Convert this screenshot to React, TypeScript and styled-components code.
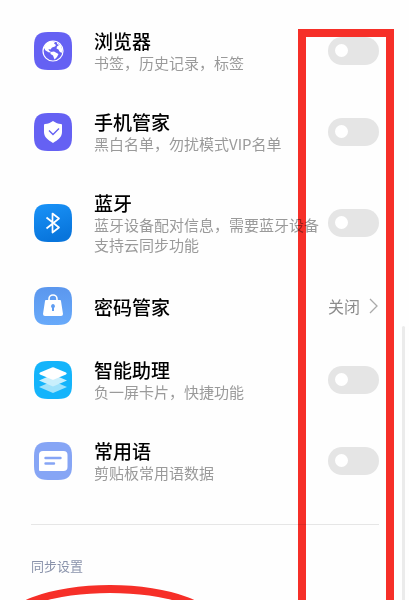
import React from "react";
import styled, { createGlobalStyle } from "styled-components";

const GlobalStyle = createGlobalStyle`
  * { box-sizing: border-box; }
  html { height: 100%; overflow: hidden; }
  body {
    height: 100%;
    margin: 0;
    overflow: hidden;
    background: #fefefe;
    font-family: "Noto Sans CJK SC", "Noto Sans", sans-serif;
  }
  #root { height: 100%; }
`;

const Screen = styled.div`
  position: relative;
  isolation: isolate;
  height: 100%;
  overflow: hidden;
  background: #fefefe;
`;

const Page = styled.main`
  padding: 10px 30px 0 31px;
`;

const List = styled.ul`
  list-style: none;
  margin: 0;
  padding: 0 0 0 3px;
`;

const Row = styled.li<{ $compact?: boolean }>`
  display: flex;
  align-items: center;
  padding: ${(p) => (p.$compact ? "14px" : "18px")} 0;
`;

const AppIcon = styled.svg`
  flex: none;
  width: 38px;
  height: 38px;
  margin-right: 22px;
`;

const Copy = styled.div`
  flex: 1;
  min-width: 0;
  display: flex;
  flex-direction: column;
`;

const Title = styled.label`
  font-size: 19px;
  line-height: 25px;
  font-weight: 500;
  color: #000;
`;

const Description = styled.span`
  font-size: 15px;
  line-height: 20px;
  color: #9a9a9a;
`;

const Toggle = styled.input`
  appearance: none;
  flex: none;
  display: flex;
  align-items: center;
  width: 51px;
  height: 28px;
  margin: 0;
  padding: 0 7px;
  border-radius: 14px;
  background: #e5e5e5;

  &::before {
    content: "";
    width: 13px;
    height: 13px;
    border-radius: 50%;
    background: #fff;
  }

  &:checked {
    justify-content: flex-end;
    background: #3482ff;
  }
`;

const LinkButton = styled.button`
  display: flex;
  align-items: center;
  gap: 9px;
  padding: 0;
  border: 0;
  background: none;
  font-family: inherit;
  font-size: 16px;
  line-height: 24px;
  color: #8c8c8c;
`;

const Divider = styled.hr`
  height: 1px;
  margin: 23px 0 31px;
  border: 0;
  background: #e6e6e6;
`;

const SectionTitle = styled.h2`
  margin: 0;
  font-size: 13px;
  line-height: 20px;
  font-weight: 400;
  color: #8a93ab;
`;

const ScrollThumb = styled.div`
  position: absolute;
  top: 326px;
  right: 4px;
  bottom: 0;
  width: 3px;
  border-radius: 2px 2px 0 0;
  background: #ebebeb;
`;

const MarkerBox = styled.div`
  position: absolute;
  top: 29px;
  right: 15px;
  bottom: -20px;
  width: 96px;
  border: 8px solid #f72f28;
  mix-blend-mode: multiply;
`;

const MarkerEllipse = styled.div`
  position: absolute;
  left: 0;
  bottom: -69px;
  width: 220px;
  height: 84px;
  border: 8px solid #f72f28;
  border-radius: 50%;
  mix-blend-mode: multiply;
`;

const tile = "M14 0h10C34 0 38 4 38 14v10c0 10-4 14-14 14H14C4 38 0 34 0 24V14C0 4 4 0 14 0Z";

const GlobeIcon = () => (
  <AppIcon viewBox="0 0 38 38" aria-hidden="true">
    <path d={tile} fill="#6561f3" />
    <circle cx="19" cy="19" r="10" fill="none" stroke="#fff" strokeWidth="1.2" />
    <path d="M10 15C12 11 15 9 18 9l3 1-1 1.500 2 1.500-1 1.500-3 1-1.500 2-2-.5.5 1.500 2 1.500-2 .5-3.500-2-2-3.500Z" fill="#fff" />
    <path d="m16.500 20 3.500-.5 4.500 2.500-1.500 3-2.500 2.500-1.500-4-2.500-1.500ZM23 10.500l4 3 1.500 5-1 2.500-2-1.500-1-2-2-1 .5-2 2-1.500-2-1Z" fill="#fff" />
  </AppIcon>
);

const ShieldIcon = () => (
  <AppIcon viewBox="0 0 38 38" aria-hidden="true">
    <path d={tile} fill="#6561f3" />
    <path d="M19 8c3 2 5 3 8 3q1 0 1 1v7c0 5-4 8-9 11-5-3-9-6-9-11v-7q0-1 1-1c3 0 5-1 8-3Z" fill="#fff" />
    <path d="m15 17.500 4 4 6-6" fill="none" stroke="#6561f3" strokeWidth="1.4" />
  </AppIcon>
);

const BluetoothIcon = () => (
  <AppIcon viewBox="0 0 38 38" aria-hidden="true">
    <defs>
      <linearGradient id="bluetooth-tile" x1="0" y1="0" x2="0.3" y2="1">
        <stop stopColor="#1a93f8" />
        <stop offset="1" stopColor="#0875dc" />
      </linearGradient>
    </defs>
    <path d={tile} fill="url(#bluetooth-tile)" />
    <path d="m12.500 13.500 12.500 10-6.500 5V9.500l6.500 5-12.500 10" fill="none" stroke="#fff" strokeWidth="1.7" strokeLinejoin="round" />
  </AppIcon>
);

const LockIcon = () => (
  <AppIcon viewBox="0 0 38 38" aria-hidden="true">
    <defs>
      <linearGradient id="lock-tile" x1="0" y1="0" x2="0" y2="1">
        <stop stopColor="#5b97ee" />
        <stop offset="1" stopColor="#68aafa" />
      </linearGradient>
    </defs>
    <path d={tile} fill="url(#lock-tile)" />
    <path d="M15 14v-2a4 4 0 0 1 8 0v2" fill="none" stroke="#fff" strokeWidth="1.6" />
    <path d="M12 13h14q1 0 1 1l2 13q0 2-2 2H11q-2 0-2-2l2-13q0-1 1-1Z" fill="#fff" />
    <path d="M19 17a2.200 2.200 0 0 1 1 4v3h-2v-3a2.200 2.200 0 0 1 1-4Z" fill="#5f9df2" />
  </AppIcon>
);

const LayersIcon = () => (
  <AppIcon viewBox="0 0 38 38" aria-hidden="true">
    <path d={tile} fill="#14b4fb" />
    <path d="m5 26 14-6 14 6-14 6Z" fill="#9fe2fb" />
    <path d="m5 19.500 14-6 14 6-14 6Z" fill="#c9effc" />
    <path d="M6 11.500 18 6.500q1-.4 2 0l12 5q1.500 1 0 2l-12 5q-1 .4-2 0l-12-5q-1.500-1 0-2Z" fill="#fff" />
  </AppIcon>
);

const PhraseIcon = () => (
  <AppIcon viewBox="0 0 38 38" aria-hidden="true">
    <path d={tile} fill="#86a5f5" />
    <path d="M9 9h20.500q4 0 4 4v12q0 4-4 4H6q-1 0-1-1V13q0-4 4-4Z" fill="#fff" />
    <path d="M11.500 16h15M11.500 21.500h8.500" fill="none" stroke="#86a5f5" strokeWidth="2.400" strokeLinecap="round" />
  </AppIcon>
);

const Chevron = styled.svg`
  width: 10px;
  height: 18px;
`;

interface SettingProps {
  id: string;
  title: string;
  description: string;
  icon: React.ReactNode;
}

const Setting = ({ id, title, description, icon }: SettingProps) => (
  <Row>
    {icon}
    <Copy>
      <Title htmlFor={id}>{title}</Title>
      <Description id={`${id}-info`}>{description}</Description>
    </Copy>
    <Toggle type="checkbox" id={id} aria-describedby={`${id}-info`} />
  </Row>
);

export default function App() {
  return (
    <>
      <GlobalStyle />
      <Screen>
        <Page>
          <List>
            <Setting id="browser" title="浏览器" description="书签，历史记录，标签" icon={<GlobeIcon />} />
            <Setting id="security" title="手机管家" description="黑白名单，勿扰模式VIP名单" icon={<ShieldIcon />} />
            <Setting
              id="bluetooth"
              title="蓝牙"
              description="蓝牙设备配对信息，需要蓝牙设备支持云同步功能"
              icon={<BluetoothIcon />}
            />
            <Row $compact>
              <LockIcon />
              <Copy>
                <Title as="span" id="passwords">密码管家</Title>
              </Copy>
              <LinkButton type="button" aria-describedby="passwords">
                关闭
                <Chevron viewBox="0 0 10 18" aria-hidden="true">
                  <path d="m1 2 7 7-7 7" fill="none" stroke="#aaa" strokeWidth="1.3" />
                </Chevron>
              </LinkButton>
            </Row>
            <Setting id="assistant" title="智能助理" description="负一屏卡片，快捷功能" icon={<LayersIcon />} />
            <Setting id="phrases" title="常用语" description="剪贴板常用语数据" icon={<PhraseIcon />} />
          </List>
          <Divider />
          <SectionTitle>同步设置</SectionTitle>
        </Page>
        <ScrollThumb />
        <MarkerBox />
        <MarkerEllipse />
      </Screen>
    </>
  );
}
